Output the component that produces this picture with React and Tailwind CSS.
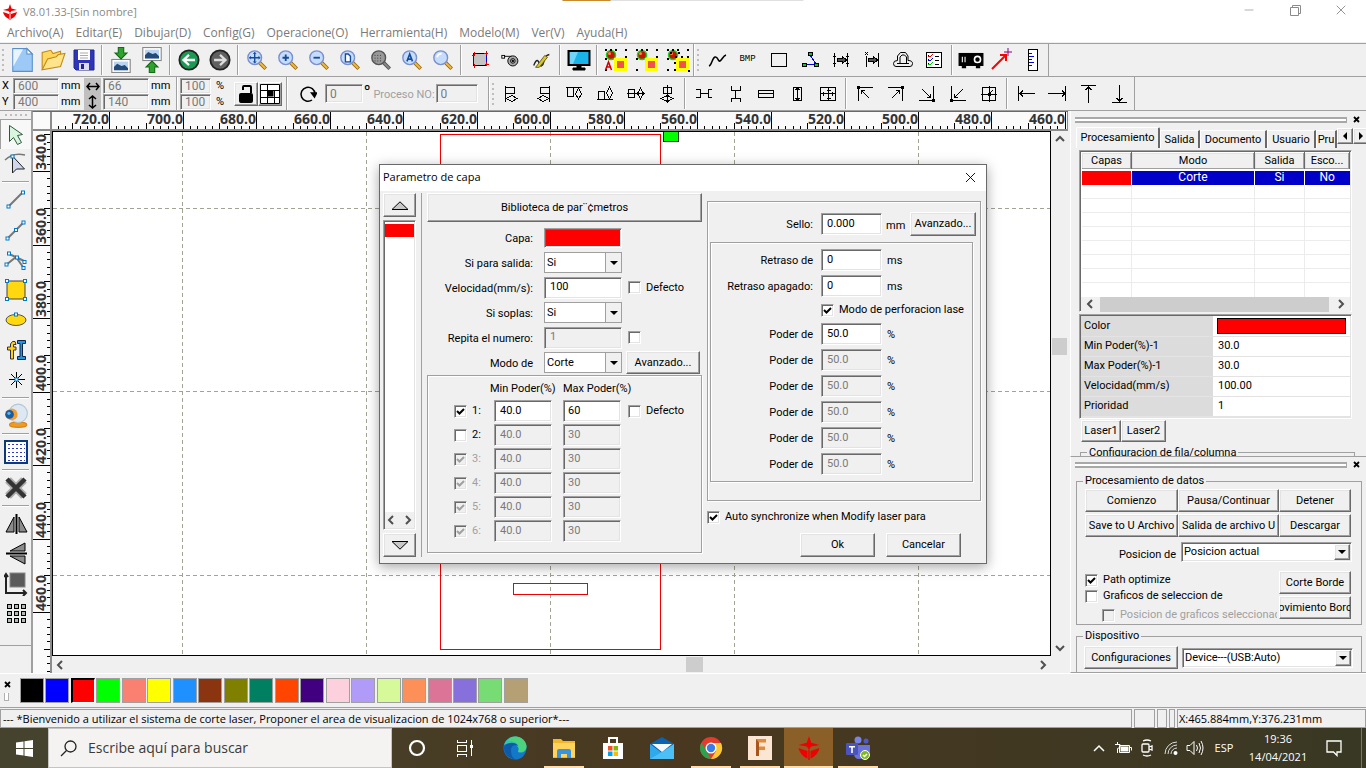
import React, { useState } from 'react';
import { Minus, X } from 'lucide-react';

const RAISED = 'border border-t-white border-l-white border-b-[#696969] border-r-[#696969] shadow-[inset_-1px_-1px_0_#a0a0a0,inset_1px_1px_0_#e3e3e3] bg-[#f0f0f0]';
const SUNKEN = 'border border-t-[#a0a0a0] border-l-[#a0a0a0] border-b-white border-r-white shadow-[inset_1px_1px_0_#696969,inset_-1px_-1px_0_#e3e3e3]';

/* ---------- basic controls ---------- */

const Icon = ({ size = 24, children, crisp = true, label }) => (
    <svg
        width={size}
        height={size}
        viewBox="0 0 24 24"
        fill="none"
        stroke="#000"
        aria-label={label}
        shapeRendering={crisp ? 'crispEdges' : 'auto'}
        className="shrink-0"
    >
        {children}
    </svg>
);

const Button = ({ className = '', children }) => (
    <button type="button" className={`${RAISED} flex items-center justify-center overflow-hidden whitespace-nowrap ${className}`}>
        {children}
    </button>
);

const Field = ({ value, disabled, label, className = '' }) => {
    const [text, setText] = useState(value);
    return (
        <input
            type="text"
            aria-label={label}
            value={text}
            disabled={disabled}
            onChange={(e) => setText(e.target.value)}
            className={`${SUNKEN} min-w-0 rounded-none outline-none ${disabled ? 'bg-[#f0f0f0] text-[#7a7a7a]' : 'bg-white text-black'} ${className}`}
        />
    );
};

const Check = ({ defaultChecked, disabled, label, children, className = '' }) => {
    const [on, setOn] = useState(!!defaultChecked);
    return (
        <label className={`flex items-center gap-[5px] whitespace-nowrap ${disabled ? 'text-[#a0a0a0]' : ''} ${className}`}>
            <span className="grid shrink-0">
                <input
                    type="checkbox"
                    aria-label={label}
                    checked={on}
                    disabled={disabled}
                    onChange={(e) => setOn(e.target.checked)}
                    className={`${SUNKEN} col-start-1 row-start-1 size-[13px] appearance-none ${disabled ? 'bg-[#f0f0f0]' : 'bg-white'}`}
                />
                {on && (
                    <svg width="13" height="13" className="pointer-events-none col-start-1 row-start-1" fill="none" stroke={disabled ? '#a0a0a0' : '#000'} strokeWidth="2">
                        <path d="M3 6l2.5 2.5L10 4" />
                    </svg>
                )}
            </span>
            {children}
        </label>
    );
};

const Combo = ({ options, label, className = '', deep }) => (
    <span className={`grid ${deep ? SUNKEN : 'border border-[#a0a0a0]'} bg-white ${className}`}>
        <select aria-label={label} className="col-start-1 row-start-1 min-w-0 appearance-none bg-transparent pl-[2px] outline-none">
            {options.map((o) => <option key={o}>{o}</option>)}
        </select>
        <span className={`pointer-events-none col-start-1 row-start-1 flex w-4 items-center justify-center justify-self-end ${deep ? `${RAISED} my-px mr-px` : 'border-l border-[#a0a0a0] bg-[#f0f0f0]'}`}>
            <svg width="8" height="4"><path d="M0 0h8L4 4z" /></svg>
        </span>
    </span>
);

const Tool = ({ name, icon, className = '' }) => (
    <button type="button" title={name} className={`flex h-full w-[31px] shrink-0 items-center justify-center ${className}`}>
        {icon}
    </button>
);

const Sep = () => (
    <span className="flex h-full w-[6px] shrink-0 justify-center py-px">
        <span className="w-[2px] border-r border-white bg-[#a0a0a0]" />
    </span>
);

const Gripper = () => (
    <span className="flex w-[6px] shrink-0 flex-col items-center justify-center gap-[3px]">
        {[0, 1, 2, 3, 4].map((i) => <span key={i} className="size-[2px] bg-[#bdbdbd]" />)}
    </span>
);

const Arrow = ({ dir }) => {
    const paths = { left: 'M8 2L4 6l4 4', right: 'M4 2l4 4-4 4', up: 'M2 8l4-4 4 4', down: 'M2 4l4 4 4-4' };
    return (
        <svg width="12" height="12" fill="none" stroke="#505050" strokeWidth="2" className="shrink-0">
            <path d={paths[dir]} />
        </svg>
    );
};

/* ---------- main toolbar icons ---------- */

const Lens = ({ children, gray }) => (
    <Icon size={22} crisp={false}>
        <path d="M14 14l7.500 7.500" stroke={gray ? '#555' : '#9a6a10'} strokeWidth="4" />
        <path d="M14 14l7 7" stroke={gray ? '#888' : '#f0bb40'} strokeWidth="2" />
        <circle cx="9.500" cy="9.500" r="7.500" fill={gray ? '#999' : '#c5dcfa'} stroke={gray ? '#555' : '#7a8fd0'} strokeWidth="1.500" />
        <g stroke="#164b9c" strokeWidth="2">{children}</g>
    </Icon>
);

const PictureThumb = ({ y }) => (
    <g>
        <rect x="3.500" y={y} width="17" height="12" fill="#fff" stroke="#888" />
        <rect x="5.500" y={y + 2} width="13" height="8" fill="#b9d5f2" stroke="none" />
        <path d={`M5.500 ${y + 10}v-3l3-3 4 2 3-1 3 3v2z`} fill="#234a78" stroke="none" />
    </g>
);

const Node = ({ x, y }) => <rect x={x} y={y} width="2" height="2" fill="#000" stroke="none" />;

const LayerIcon = ({ variant }) => (
    <Icon crisp={false}>
        <circle cx="7" cy="7" r="4.500" fill="#c01800" stroke="#20d020" strokeWidth="1.500" />
        <circle cx="5.500" cy="5.500" r="1.500" fill="#ff8050" stroke="none" />
        <rect x="10" y="10" width="13" height="13" fill="#ffff00" stroke="none" />
        <rect x="13" y="13" width="7" height="7" fill="#f05050" stroke="none" />
        {[[1, 1], [6, 1], [11, 1], [21, 1], [1, 21], [21, 8], [1, 10]].map(([x, y]) => <Node key={`${x}-${y}`} x={x} y={y} />)}
        {variant === 'a' && <path d="M1.500 22l3-8 3 8M2.500 19h4" stroke="#d00000" strokeWidth="1.500" />}
        {variant === 'c' && [[9, 8], [15, 8], [8, 14], [8, 21], [12, 4], [4, 4], [22, 22]].map(([x, y]) => <Node key={`${x}-${y}`} x={x} y={y} />)}
    </Icon>
);

const fileTools = [
    ['Nuevo', <Icon size={26} crisp={false}><path d="M3.500 1.500h13l5 5v16h-18z" fill="#9cc9f6" stroke="#5b8fca" /><path d="M4 2h9L4 18z" fill="#e8f4ff" stroke="none" /><path d="M16.500 1.500v5h5z" fill="#fff" stroke="#5b8fca" /></Icon>],
    ['Abrir', <Icon size={26} crisp={false}><path d="M2 21V5l8-2 2 3 7-2v4" fill="#ffd75e" stroke="#c08a18" /><path d="M2 21L7 11l8-2 2-2 6-1-4 12z" fill="#ffe48c" stroke="#c08a18" /></Icon>],
    ['Guardar', <Icon size={24} crisp={false}><path d="M2 2h20v20H4l-2-2z" fill="#2e35b8" stroke="#20268c" /><rect x="6" y="2" width="12" height="10" fill="#fff" stroke="none" /><path d="M8 5h8M8 7.500h8M8 10h8" stroke="#aaa" /><rect x="7" y="15" width="10" height="7" fill="#dde" stroke="none" /><rect x="9" y="16" width="3" height="5" fill="#20268c" stroke="none" /></Icon>],
];
const importTools = [
    ['Importar', <Icon size={26} crisp={false}><PictureThumb y={11.5} /><path d="M9.500 0.500h5v5h3L12 11 6.500 5.500h3z" fill="#2fa32f" stroke="#136b13" /></Icon>],
    ['Exportar', <Icon size={26} crisp={false}><PictureThumb y={0.5} /><path d="M9.500 23.500h5v-5h3L12 13l-5.500 5.500h3z" fill="#2fa32f" stroke="#136b13" /></Icon>],
];
const historyTools = [
    ['Deshacer', <Icon size={22} crisp={false}><circle cx="12" cy="12" r="10.500" fill="#1c9a54" stroke="#222" strokeWidth="2" /><path d="M18.500 12H7M12 6.500L6 12l6 5.500" stroke="#fff" strokeWidth="2.500" /></Icon>],
    ['Rehacer', <Icon size={22} crisp={false}><circle cx="12" cy="12" r="10.500" fill="#606060" stroke="#222" strokeWidth="2" /><path d="M5.500 12H17M12 6.500l6 5.500-6 5.500" stroke="#ddd" strokeWidth="2.500" /></Icon>],
];
const zoomTools = [
    ['Mover', <Lens><path d="M9.500 4v11M4 9.500h11" strokeWidth="1.500" /><path d="M8 5.500l1.500-2 1.500 2M8 13.500l1.500 2 1.500-2M5.500 8l-2 1.500 2 1.500M13.500 8l2 1.500-2 1.500" strokeWidth="1" /></Lens>],
    ['Acercar', <Lens><path d="M9.500 6v7M6 9.500h7" /></Lens>],
    ['Alejar', <Lens><path d="M6 9.500h7" /></Lens>],
    ['Ver pagina', <Lens><path d="M7 5.500h3l2.500 2.500v6H7z" fill="#fff" strokeWidth="1.500" /></Lens>],
    ['Ver mesa', <Lens gray><path d="M5 7h9M5 10h9M5 13h9" stroke="#333" strokeWidth="1" strokeDasharray="1 2" /></Lens>],
    ['Ver todo', <Lens><path d="M6.500 13.500l3-8 3 8M7.500 11h4" strokeWidth="1.800" /></Lens>],
    ['Ver seleccion', <Lens><path d="M5.500 9q1-4 5-4" stroke="#fff" /></Lens>],
];
const pathTools = [
    ['Marco', <Icon><rect x="5.500" y="5.500" width="13" height="12" fill="#c4c4c4" stroke="#0000e0" /><path d="M5.500 5.500h13M5 17.500h14" stroke="#000" /><path d="M4 7.500h3M16 5.500h4M18.500 3v4M6.500 4v3M6.500 16v4M17 16.500h4M18.500 14v4" stroke="#e00000" /></Icon>],
    ['Entrada', <Icon size={22} crisp={false}><path d="M4 8h9" /><rect x="2" y="7" width="3" height="3" fill="#fff" /><circle cx="14" cy="13" r="5.500" fill="#aaa" /><circle cx="14" cy="13" r="2.500" fill="#ddd" /><circle cx="14" cy="13" r="1" fill="#000" /></Icon>],
    ['Editar', <Icon size={22} crisp={false}><path d="M3 18c3-8 5-6 6-2s4 3 5-2 2-7 6-8" stroke="#222" strokeWidth="1.500" /><path d="M5 20L15 7l3 2L9 20z" fill="#d6c72a" stroke="#665c10" /></Icon>],
];
const previewTools = [
    ['Vista previa', <Icon crisp={false}><rect x="1.500" y="3" width="21" height="14" fill="#19b3ea" stroke="#000" strokeWidth="2" /><path d="M3 4h8l-5 12H3z" fill="#6fd5fa" stroke="none" /><path d="M10 18h4v2h4v2H6v-2h4z" fill="#000" /></Icon>],
];
const layerTools = [
    ['Capas A', <LayerIcon variant="a" />],
    ['Capas B', <LayerIcon variant="b" />],
    ['Capas C', <LayerIcon variant="c" />],
];
const drawTools = [
    ['Curva', <Icon crisp={false}><path d="M4 18c3-1 3-8 6-9s3 5 5 4 3-5 6-6" strokeWidth="1.500" /></Icon>],
    ['BMP', <span className="font-['Liberation_Mono',monospace] text-[9px] text-black">BMP</span>],
    ['Rectangulo', <Icon><rect x="4.500" y="5.500" width="15" height="13" strokeWidth="1" /></Icon>],
    ['Nodos', <Icon><path d="M6 16.500h12M12 7l6 9" stroke="#0000e0" />{[[10, 4], [4, 15], [16, 15]].map(([x, y]) => <rect key={x} x={x + 0.5} y={y + 0.5} width="4" height="3" fill="#00d020" />)}</Icon>],
    ['Ajuste', <Icon><path d="M5.500 5v14M18.500 5v14M4 8.500h3M4 15.500h3M17 8.500h3M17 15.500h3" /><path d="M8 10.500h5v-2l5 3.500-5 3.500v-2H8z" fill="#555" /></Icon>],
    ['Ajuste lateral', <Icon><path d="M6.500 8v11M18.500 5v14M5 4l3 3M8 4L5 7" /><path d="M8 10.500h5v-2l5 3.500-5 3.500v-2H8z" fill="#555" /></Icon>],
    ['Contorno', <Icon crisp={false}><path d="M5 18.500q-2.500 0-2.500-3t4-3V8l3-3.500h5L17 8v4.500q4.500 0 4.500 3t-2.500 3z" /><path d="M6 15.500h12M9 15V9l2-2h2.500l2 2v6" /></Icon>],
    ['Lista', <Icon><rect x="4.500" y="4.500" width="15" height="15" fill="#fff" strokeWidth="1" /><path d="M6 8l2 1 3-3" stroke="#e00000" /><path d="M6 12l2 1 3-3" stroke="#0000e0" /><path d="M6 16l2 1 3-3" stroke="#00c000" /><path d="M13 8.500h4M13 12.500h4M13 16.500h4M6 7.500h1M6 11.500h1M6 15.500h1" /></Icon>],
];
const deviceTools = [
    ['Proyector', <Icon size={26} crisp={false}><rect x="1" y="6" width="22" height="11" fill="#000" /><path d="M4 17v2h3v-2M17 17v2h3v-2" fill="#000" /><path d="M4 9v5M6.500 9v5" stroke="#fff" /><circle cx="18" cy="11.500" r="2.800" fill="#000" stroke="#fff" strokeWidth="1.500" /></Icon>],
    ['Origen', <Icon crisp={false}><path d="M2 21L15 8M10 7l6 0v6" stroke="#f00" strokeWidth="2" /><path d="M18 0v8M14 4h8" stroke="#800080" /></Icon>],
    ['Regla', <Icon><rect x="7.500" y="1.500" width="9" height="21" fill="#fff" /><path d="M8 5.500h3M8 8.500h5M8 11.500h3M8 14.500h5M8 17.500h3" stroke="#0000e0" /></Icon>],
];

/* ---------- align icons ---------- */

const Corner = ({ d, x, y }) => (
    <Icon>
        <path d={d} />
        <rect x={x} y={y} width="3" height="3" fill="#000" stroke="none" />
    </Icon>
);

const alignTools = [
    ['Izquierda', <Icon><path d="M5.500 4v16M5.500 5.500h9v6h-9M6 16.500l6-3 5 3-5 3z" /></Icon>],
    ['Derecha', <Icon><path d="M18.500 4v16M18.500 5.500h-9v6h9M18 16.500l-6-3-5 3 5 3z" /></Icon>],
    ['Arriba', <Icon><path d="M4 5.500h16M5.500 6v8h6V6M16.500 6l3 6-3 5-3-5z" /></Icon>],
    ['Abajo', <Icon><path d="M4 17.500h16M5.500 17V9h6v8M16.500 17l3-6-3-6-3 6z" /></Icon>],
    ['Centro H', <Icon><path d="M3 11.500h18M4.500 7.500h6v8h-6zM16.500 6l3 5.500-3 5.500-3-5.500z" /></Icon>],
    ['Centro V', <Icon><path d="M12.500 3v18M8.500 5.500h8v6h-8zM6 16.500l6.500-3 5.500 3-5.500 3z" /></Icon>],
];
const spaceTools = [
    ['Espacio H', <Icon><path d="M4 7.500h4v8H4M20 7.500h-4v8h4M8 11.500h8" /></Icon>],
    ['Espacio V', <Icon><path d="M8 4v4h9V4M8 20v-4h9v4M12.500 8v8" /></Icon>],
    ['Mismo ancho', <Icon><path d="M4.500 8.500h15v7h-15zM5 11.500h14" /></Icon>],
    ['Mismo alto', <Icon><path d="M8.500 5.500h8v13h-8zM12.500 6v12M10.500 8l2-2 2 2M10.500 16l2 2 2-2" /></Icon>],
    ['Mismo tamaño', <Icon><path d="M4.500 5.500h15v13h-15zM12.500 6v12M5 11.500h14M10.500 8h4M10.500 16h4M7.500 10v4M16.500 10v4" /></Icon>],
];
const cornerTools = [
    ['Sup. izquierda', <Corner d="M5.500 5v14M5 5.500h15M8 8l8 8M8.500 12V8.500H12" x="4" y="4" />],
    ['Sup. derecha', <Corner d="M18.500 5v14M4 5.500h15M16 8l-8 8M12 8.500h3.500V12" x="17" y="4" />],
    ['Inf. derecha', <Corner d="M18.500 4v15M4 18.500h15M7 7l9 9M12 15.500h3.500V12" x="17" y="17" />],
    ['Inf. izquierda', <Corner d="M5.500 4v15M5 18.500h15M17 7l-9 9M12 15.500H8.500V12" x="4" y="17" />],
    ['Centro', <Corner d="M5.500 5.500h13v13h-13zM12.500 4v16M4 12.500h16M13 11l3-3" x="11" y="11" />],
];
const edgeTools = [
    ['Borde izquierdo', <Icon><path d="M4.500 4v15M5 11.500h16M9 8.500l-3 3 3 3" /></Icon>],
    ['Borde derecho', <Icon><path d="M20.500 4v15M20 11.500H3M17 8.500l3 3-3 3" /></Icon>],
    ['Borde superior', <Icon><path d="M5 3.500h15M12.500 4v17M9.500 8l3-3 3 3" /></Icon>],
    ['Borde inferior', <Icon><path d="M5 20.500h15M12.500 20V3M9.500 16l3 3 3-3" /></Icon>],
];

const ToolGroup = ({ tools }) => tools.map(([name, icon]) => <Tool key={name} name={name} icon={icon} />);

/* ---------- left bar ---------- */

const dot = (x, y) => <rect key={`${x},${y}`} x={x - 1.5} y={y - 1.5} width="3" height="3" fill="#fff" stroke="#0078c8" />;
const square = (x, y) => <rect key={`${x},${y}`} x={x + 0.5} y={y + 0.5} width="4" height="4" fill="#b4bab4" stroke="#000" />;

const sideGroups = [
    [
        ['Seleccionar', <Icon crisp={false}><path d="M5.500 2.500l13 9-5 1 4 7-4 2-4-7-4 4z" fill="#d8f5e0" stroke="#2d5a38" /></Icon>],
        ['Editar nodo', <Icon crisp={false}><path d="M1 8c6-6 12-7 20-5" stroke="#777" strokeWidth="1.500" /><path d="M8.500 4v17l4-4h8z" fill="#cfd6ee" stroke="#222" />{dot(8.5, 4.5)}</Icon>],
    ],
    [
        ['Linea', <Icon crisp={false}><path d="M4 19L19 4" stroke="#777" strokeWidth="2" />{dot(4.5, 18.5)}{dot(19, 4.5)}</Icon>],
        ['Polilinea', <Icon crisp={false}><path d="M3 21L20 4" stroke="#777" strokeWidth="2" />{dot(3.5, 20.5)}{dot(12, 12)}{dot(19.5, 4.5)}</Icon>],
        ['Curva', <Icon crisp={false}><path d="M2 17L12 9l8 4M5 6l7 3 7 10" stroke="#777" strokeWidth="2" />{dot(2.5, 16.5)}{dot(5, 5.5)}{dot(13, 9.5)}{dot(20.5, 14)}{dot(19.5, 20)}</Icon>],
        ['Rectangulo', <Icon crisp={false}><rect x="3" y="3" width="18" height="18" fill="#ffd810" stroke="#444" />{dot(3, 3)}{dot(21, 3)}{dot(3, 21)}{dot(21, 21)}</Icon>],
        ['Elipse', <Icon crisp={false}><ellipse cx="12" cy="12" rx="10" ry="5.500" fill="#ffd810" stroke="#555" />{dot(12, 6.5)}</Icon>],
        ['Texto', <Icon crisp={false}><path d="M11 3.500H8.500L6.500 6v3h-3v3h3v9h3v-9H12V9H9.500V6.500H12z" fill="#ffd020" stroke="#333" /><path d="M13.500 2.500h8v3h-3v13h3v3h-8v-3h2.500v-13h-2.500z" fill="#2196e0" stroke="#124" /></Icon>],
        ['Punto', <Icon crisp={false}><path d="M12.500 4v16M5 11.500h16M7 6l11 11M18 6L7 17" />{dot(12.5, 11.5)}</Icon>],
    ],
    [
        ['Camara', <Icon size={26} crisp={false}><ellipse cx="14" cy="20" rx="8" ry="2.500" fill="#f29a20" stroke="#d98514" /><circle cx="14" cy="9.500" r="8.500" fill="#dde8f2" stroke="#b4c6d6" /><circle cx="8" cy="10.500" r="5.500" fill="#f2a035" stroke="none" /><circle cx="6" cy="10.500" r="4" fill="#1c5c9c" stroke="none" /><circle cx="5.500" cy="9.500" r="1.500" fill="#5fb4ea" stroke="none" /></Icon>],
    ],
    [
        ['Matriz', <Icon><rect x="1" y="1" width="22" height="22" fill="#fff" stroke="#0a3a78" strokeWidth="2" /><path d="M4 4.500h17M4 8.500h17M4 12.500h17M4 16.500h17M4 20.500h17" stroke="#3038c8" strokeDasharray="2 2" /></Icon>],
    ],
    [
        ['Borrar', <Icon crisp={false}><path d="M4 4l16 16M20 4L4 20" stroke="#aaa" strokeWidth="8" /><path d="M3 3l18 18M21 3L3 21" stroke="#333" strokeWidth="4.500" /></Icon>],
    ],
    [
        ['Espejo H', <Icon crisp={false}><path d="M12.500 2v20" strokeWidth="2" /><path d="M10 5v15H2zM15 5v15h8z" fill="#8c8c8c" /></Icon>],
        ['Espejo V', <Icon crisp={false}><path d="M2 11.500h21" strokeWidth="2" /><path d="M21 9V1L6 9zM21 14v8L6 14z" fill="#8c8c8c" /></Icon>],
        ['Posicion', <Icon crisp={false}><rect x="6" y="1" width="15" height="14" fill="#5a5a5a" stroke="#888" /><path d="M2 2v19h20M19 18l3 3-3 3M0 5l2-3 2 3" strokeWidth="2" stroke="#222" /></Icon>],
        ['Copiar matriz', <Icon crisp={false}>{[2, 9, 16].map((y) => [3, 10, 17].map((x) => square(x, y)))}</Icon>],
    ],
];

const SideBar = () => (
    <nav className="flex w-8 shrink-0 flex-col border-r border-[#a0a0a0] bg-[#f0f0f0]">
        <div className="flex h-2 items-center justify-center gap-[3px]">
            {[0, 1, 2, 3, 4].map((i) => <span key={i} className="size-[2px] bg-[#bdbdbd]" />)}
        </div>
        {sideGroups.map((group, i) => (
            <div key={i} className="flex flex-col">
                {i > 0 && <span className="mx-[2px] my-[2px] h-[2px] border-b border-white bg-[#a0a0a0]" />}
                {group.map(([name, icon], j) => (
                    <button
                        key={name}
                        type="button"
                        title={name}
                        className={`flex h-[30px] items-center justify-center ${i === 0 && j === 0 ? 'border-t border-l border-[#a0a0a0] bg-[#f8f8f8]' : ''}`}
                    >
                        {icon}
                    </button>
                ))}
            </div>
        ))}
        <span className="mt-4 border-t border-[#a0a0a0]" />
    </nav>
);

/* ---------- top ---------- */

const menus = ['Archivo(A)', 'Editar(E)', 'Dibujar(D)', 'Config(G)', 'Operacione(O)', 'Herramienta(H)', 'Modelo(M)', 'Ver(V)', 'Ayuda(H)'];

const Logo = ({ size = 16 }) => (
    <svg width={size} height={size} viewBox="0 0 16 16" fill="#f00000">
        <path d="M8 0l1.500 4.500L15 6l-5.500 1L8 9 6.500 7 1 6l5.500-1.500z" />
        <path d="M1 8l6 2v5q-5-2-6-7zM15 8l-6 2v5q5-2 6-7zM7.500 9h1v7h-1z" />
    </svg>
);

const TitleBar = () => (
    <header className="relative bg-white text-[#7a7a7a]">
        <div className="absolute top-0 left-1/2 flex h-px w-[241px] -translate-x-1/2 bg-[#e0e0e0]">
            <span className="w-12 bg-[#c88a2c]" />
        </div>
        <div className="flex h-6 items-center">
            <span className="flex w-[23px] justify-center pr-1"><Logo /></span>
            <h1 className="flex-1 text-[11px] text-[#8a8a8a]">V8.01.33-[Sin nombre]</h1>
            <button type="button" title="Minimizar" className="flex w-[46px] justify-center pb-1"><Minus size={14} strokeWidth={1} /></button>
            <button type="button" title="Restaurar" className="flex w-[46px] justify-center pb-1">
                <svg width="11" height="11" fill="none" stroke="#8a8a8a"><path d="M.5 2.500h8v8h-8zM2.500 2V.5h8v8H9" /></svg>
            </button>
            <button type="button" title="Cerrar" className="mr-[2px] flex w-[46px] justify-center pb-1"><X size={16} strokeWidth={1.2} /></button>
        </div>
        <nav className="flex h-[18px] items-center gap-3 pl-[7px] text-xs">
            {menus.map((m) => <button key={m} type="button">{m}</button>)}
        </nav>
    </header>
);

const MainToolbar = () => (
    <div className="mt-px flex h-[33px] border-t border-[#a0a0a0]">
        <div className="flex border-r border-[#a0a0a0]">
            <Gripper />
            <ToolGroup tools={fileTools} /><Sep />
            <ToolGroup tools={importTools} /><Sep />
            <ToolGroup tools={historyTools} /><Sep />
            <ToolGroup tools={zoomTools} /><Sep />
            <ToolGroup tools={pathTools} /><Sep />
            <ToolGroup tools={previewTools} /><Sep />
            <ToolGroup tools={layerTools} />
        </div>
        <div className="flex border-r border-l border-r-[#a0a0a0] border-l-white">
            <Gripper />
            <ToolGroup tools={drawTools} /><Sep />
            <ToolGroup tools={deviceTools} />
        </div>
    </div>
);

const SizeField = ({ label, value }) => (
    <Field label={label} value={value} disabled className="h-4 w-[46px] px-1 text-xs" />
);

const CoordToolbar = () => (
    <div className="flex h-[34px] border-t border-[#a0a0a0] font-[Roboto,sans-serif] text-[11px]">
        <div className="grid w-[177px] grid-cols-[13px_46px_25px_17px_48px_1fr] grid-rows-2 items-center border-r border-[#a0a0a0] pt-px">
            <span className="pl-[2px]">X</span>
            <SizeField label="X" value="600" />
            <span className="pl-[2px]">mm</span>
            <span className="flex h-full items-center justify-center bg-[#c0c0c0]"><svg width="14" height="9" stroke="#000" fill="none" strokeWidth="1.500"><path d="M1 4.500h12M4 1L1 4.500 4 8M10 1l3 3.500L10 8" /></svg></span>
            <span className="flex pl-[2px]"><SizeField label="Ancho" value="66" /></span>
            <span className="pl-[2px]">mm</span>
            <span className="pl-[2px]">Y</span>
            <SizeField label="Y" value="400" />
            <span className="pl-[2px]">mm</span>
            <span className="flex h-full items-center justify-center bg-[#c0c0c0]"><svg width="9" height="14" stroke="#000" fill="none" strokeWidth="1.500"><path d="M4.500 1v12M1 4l3.500-3L8 4M1 10l3.500 3L8 10" /></svg></span>
            <span className="flex pl-[2px]"><SizeField label="Alto" value="140" /></span>
            <span className="pl-[2px]">mm</span>
        </div>
        <div className="flex items-center border-r border-l border-r-[#a0a0a0] border-l-white pr-[4px] pl-[2px]">
            <div className="grid h-full grid-cols-[31px_18px] grid-rows-2 items-center gap-x-[5px] pt-px">
                <Field label="Escala X" value="100" disabled className="h-4 w-[31px] px-1 text-xs" />
                <span>%</span>
                <Field label="Escala Y" value="100" disabled className="h-4 w-[31px] px-1 text-xs" />
                <span>%</span>
            </div>
            <Button className="size-6 border-[#696969]">
                <svg width="18" height="20" fill="none" stroke="#000" strokeWidth="2"><rect x="3" y="10" width="12" height="8" rx="1" fill="#000" /><path d="M6 6V3q0-1 1-1h6q1 0 1 1v6" /></svg>
            </Button>
            <Button className="size-6">
                <svg width="20" height="20" fill="#fff" stroke="#000"><path d="M.5.5h19v19H.5zM.5 6.500h19M7.500.5v19M14.500 6.500v13M.5 13.500h19" /><rect x="8" y="7" width="5" height="5" fill="#000" /></svg>
            </Button>
        </div>
        <div className="flex w-[202px] items-center border-r border-l border-r-[#a0a0a0] border-l-white pl-[11px]">
            <svg width="18" height="18" fill="none" stroke="#000" strokeWidth="1.500" className="shrink-0"><path d="M13 15A7 7 0 1 1 16 9" /><path d="M12.500 8h5l-2 4z" fill="#000" /></svg>
            <Field label="Angulo" value="0" disabled className="ml-[8px] h-[19px] w-[38px] px-1 text-xs" />
            <span className="-mt-2 ml-px text-sm">º</span>
            <span className="mt-1 ml-[3px] text-[11px] whitespace-nowrap text-[#a0a0a0]">Proceso NO:</span>
            <Field label="Proceso" value="0" disabled className="ml-px h-[19px] w-[42px] px-1 text-xs" />
        </div>
        <div className="flex border-r border-l border-r-[#a0a0a0] border-l-white">
            <Gripper />
            <ToolGroup tools={alignTools} /><Sep />
            <ToolGroup tools={spaceTools} /><Sep />
            <ToolGroup tools={cornerTools} /><Sep />
            <ToolGroup tools={edgeTools} />
        </div>
    </div>
);

/* ---------- drawing area ---------- */

const STEP = 73.5;
const range = (n) => Array.from({ length: n }, (_, i) => i);
const ticks = (first, count) => range(count).map((i) => ({
    at: Math.round(first + (i * STEP) / 10),
    size: i % 10 === 0 ? 17 : i % 5 === 0 ? 6 : 3,
}));

const RulerTop = () => (
    <svg className="block h-full w-full overflow-x-clip overflow-y-visible bg-[#fafafa]" shapeRendering="crispEdges">
        {ticks(57 - STEP, 150).map(({ at, size }, i) => <path key={i} d={`M${at + 0.5} 17v-${size}`} stroke="#000" />)}
        <g className="font-['Open_Sans',sans-serif] text-sm font-bold" fill="#333" textAnchor="end">
            {range(14).map((i) => <text key={i} x={Math.round(57 + i * STEP)} y="12">{`${720 - i * 20}.0`}</text>)}
        </g>
    </svg>
);

const RulerLeft = () => (
    <svg className="block h-full w-full overflow-x-visible overflow-y-clip bg-[#fafafa]" shapeRendering="crispEdges">
        {ticks(40 - STEP, 90).map(({ at, size }, i) => <path key={i} d={`M17 ${at + 0.5}h-${size}`} stroke="#000" />)}
        <g className="font-['Open_Sans',sans-serif] text-sm font-bold" fill="#333">
            {range(7).map((i) => <text key={i} transform={`translate(13 ${Math.round(39 + i * STEP)}) rotate(-90)`}>{`${340 + i * 20}.0`}</text>)}
        </g>
    </svg>
);

const Drawing = () => (
    <svg className="block h-full w-full bg-white" shapeRendering="crispEdges" fill="none">
        <g stroke="#a3a394" strokeDasharray="4 3">
            {range(5).map((i) => <line key={i} x1={129.5 + i * 184} x2={129.5 + i * 184} y1="0" y2="100%" />)}
            {[76.5, 259.5, 443.5].map((y) => <line key={y} x1="0" x2="100%" y1={y} y2={y} />)}
        </g>
        <rect x="387.500" y="2.500" width="220" height="515" stroke="#f00000" />
        <rect x="460.500" y="451.500" width="74" height="11" stroke="#f00000" />
        <rect x="610.500" y="-1.500" width="15" height="11" fill="#00ff00" stroke="#004000" />
    </svg>
);

const Workspace = () => (
    <main className="grid min-w-0 flex-1 grid-cols-[19px_1fr_17px] grid-rows-[19px_1fr_17px] border-t border-l border-t-[#696969] border-l-[#a0a0a0] bg-[#f0f0f0]">
        <div className="border-r-2 border-b-2 border-[#8c8c8c] bg-[#fafafa]" />
        <div className="col-span-2 min-w-0 border-r border-b-2 border-[#8c8c8c]"><RulerTop /></div>
        <div className="row-span-2 min-h-0 border-r-2 border-[#8c8c8c]"><RulerLeft /></div>
        <div className="min-h-0 min-w-0 border border-black"><Drawing /></div>
        <div className="flex flex-col items-center py-[2px]">
            <Arrow dir="up" />
            <span className="mt-[193px] h-[17px] w-[15px] bg-[#cdcdcd]" />
            <span className="mt-auto"><Arrow dir="down" /></span>
        </div>
        <div className="flex items-center justify-between px-[2px]">
            <Arrow dir="left" />
            <span className="ml-[285px] h-[15px] w-[17px] bg-[#cdcdcd]" />
            <Arrow dir="right" />
        </div>
        <div />
    </main>
);

/* ---------- right panels ---------- */

const PanelHead = ({ title }) => (
    <div className="flex h-[8px] items-center pl-1">
        <span className="h-[6px] flex-1 border-y-2 border-r border-[#a8a8a8] bg-white" />
        <button type="button" title={title} className="flex w-[19px] justify-center">
            <svg width="7" height="7" stroke="#000" strokeWidth="1.800"><path d="M1 1l5 5M6 1L1 6" /></svg>
        </button>
    </div>
);

const tabs = [
    ['Salida', 'w-10'],
    ['Documento', 'w-[67px]'],
    ['Usuario', 'w-[49px]'],
    ['Pru', 'w-[21px] border-r-0'],
];

const layerProps = [
    ['Min Poder(%)-1', '30.0'],
    ['Max Poder(%)-1', '30.0'],
    ['Velocidad(mm/s)', '100.00'],
    ['Prioridad', '1'],
];

const LayerPanel = () => (
    <section className="flex h-[345px] shrink-0 flex-col overflow-hidden border-l border-white pt-[5px]">
        <PanelHead title="Cerrar capas" />
        <div className="mt-[4px] flex h-[21px] shrink-0 items-end overflow-hidden pl-[5px]">
            <button type="button" className="h-[21px] w-[84px] shrink-0 rounded-t-xs border-t border-r-2 border-l border-t-white border-r-[#696969] border-l-white">Procesamiento</button>
            {tabs.map(([name, width]) => (
                <button key={name} type="button" className={`h-[18px] shrink-0 overflow-hidden border-t border-r-2 border-l border-t-white border-r-[#696969] border-l-white ${width}`}>{name}</button>
            ))}
            <Button className="mb-[4px] h-4 w-4 shrink-0"><svg width="4" height="8"><path d="M4 0v8L0 4z" /></svg></Button>
            <Button className="mb-[4px] h-4 w-4 shrink-0"><svg width="4" height="8"><path d="M0 0v8l4-4z" /></svg></Button>
        </div>
        <div className={`${SUNKEN} mt-[2px] mr-[14px] ml-[8px] flex h-[162px] shrink-0 flex-col bg-white p-px`}>
            <table className="w-full table-fixed border-collapse text-center">
                <thead>
                    <tr className="h-[17px]">
                        <th className={`${RAISED} w-[50px] font-normal`}>Capas</th>
                        <th className={`${RAISED} font-normal`}>Modo</th>
                        <th className={`${RAISED} w-[50px] font-normal`}>Salida</th>
                        <th className={`${RAISED} w-[45px] font-normal`}>Esco...</th>
                    </tr>
                </thead>
                <tbody>
                    <tr className="h-[15px] border-t-2 border-white bg-[#0000c8] text-xs leading-[13px] text-white">
                        <td className="border-r border-white bg-[#ff0000]" />
                        <td className="border-r border-white">Corte</td>
                        <td className="border-r border-white">Si</td>
                        <td>No</td>
                    </tr>
                    {range(8).map((i) => (
                        <tr key={i} className={`h-[14px] ${i < 7 ? 'border-b border-[#ececec]' : ''}`}>
                            <td className="border-r border-[#ececec]" />
                            <td className="border-r border-[#ececec]" />
                            <td className="border-r border-[#ececec]" />
                            <td />
                        </tr>
                    ))}
                </tbody>
            </table>
            <div className="mt-auto flex h-[15px] shrink-0 items-center gap-[4px] bg-[#f0f0f0] px-[3px]">
                <Arrow dir="left" />
                <span className="h-full flex-1 bg-[#cdcdcd]" />
                <span className="pl-[2px]"><Arrow dir="right" /></span>
            </div>
        </div>
        <div className={`${SUNKEN} mt-[2px] mr-[14px] ml-[8px] shrink-0 bg-white p-px`}>
            <table className="w-full border-collapse">
                <tbody>
                    <tr className="h-5 border-b border-[#e3e3e3]">
                        <th className="w-[132px] bg-[#dcdcdc] pl-[3px] text-left font-normal">Color</th>
                        <td className="px-[4px]"><span className="block h-4 border border-black bg-[#ff0000]" /></td>
                    </tr>
                    {layerProps.map(([name, value]) => (
                        <tr key={name} className="h-5 border-b border-[#e3e3e3]">
                            <th className="bg-[#dcdcdc] pl-[3px] text-left font-normal">{name}</th>
                            <td className="pl-[5px]">{value}</td>
                        </tr>
                    ))}
                </tbody>
            </table>
        </div>
        <div className="mt-[1px] ml-[10px] flex h-[22px] shrink-0">
            <Button className="w-10">Laser1</Button>
            <Button className="w-[45px]">Laser2</Button>
        </div>
        <fieldset className="mt-[4px] mr-[11px] ml-[9px] h-5 shrink-0 border border-[#a0a0a0]">
            <legend className="ml-[6px] px-[2px]">Configuracion de fila/columna</legend>
        </fieldset>
    </section>
);

const ProcessPanel = () => (
    <section className="flex min-h-0 flex-1 flex-col overflow-hidden border-t border-b border-l border-[#a0a0a0] border-l-white pt-[4px]">
        <PanelHead title="Cerrar procesamiento" />
        <fieldset className="mt-[6px] mr-[4px] ml-[5px] h-[151px] shrink-0 border border-[#a0a0a0] px-[8px]">
            <legend className="-ml-[2px] px-[2px] leading-[14px]">Procesamiento de datos</legend>
            <div className="mt-px grid auto-rows-[23px] grid-cols-[93px_101px_72px] gap-y-[2px]">
                <Button>Comienzo</Button>
                <Button>Pausa/Continuar</Button>
                <Button>Detener</Button>
                <Button>Save to U Archivo</Button>
                <Button>Salida de archivo U</Button>
                <Button>Descargar</Button>
            </div>
            <label className="mt-[5px] flex w-[267px] items-center justify-end gap-[5px]">
                <span className="pt-[6px]">Posicion de</span>
                <Combo deep label="Posicion de" options={['Posicion actual', 'Origen', 'Origen maquina']} className="h-5 w-[171px]" />
            </label>
            <div className="mt-[9px] flex w-[266px] justify-between">
                <div className="flex min-w-0 flex-col gap-[2px] pt-[2px]">
                    <Check defaultChecked>Path optimize</Check>
                    <Check>Graficos de seleccion de</Check>
                    <Check disabled className="w-[192px] overflow-hidden pt-[3px] pl-[17px]">Posicion de graficos seleccionadc</Check>
                </div>
                <div className="flex shrink-0 flex-col gap-[2px]">
                    <Button className="h-[23px] w-[72px]">Corte Borde</Button>
                    <Button className="h-[23px] w-[72px]">ovimiento Borc</Button>
                </div>
            </div>
        </fieldset>
        <fieldset className="mt-[4px] mr-[4px] ml-[5px] h-[60px] shrink-0 border border-[#a0a0a0] px-[7px]">
            <legend className="-ml-[1px] px-[2px] leading-[14px]">Dispositivo</legend>
            <div className="mt-[3px] flex items-center gap-[4px]">
                <Button className="h-[23px] w-[94px]">Configuraciones</Button>
                <Combo deep label="Dispositivo" options={['Device---(USB:Auto)', 'Device---(Web)']} className="h-5 w-[171px]" />
            </div>
        </fieldset>
    </section>
);

/* ---------- layer dialog ---------- */

const LabeledRow = ({ label, children }) => (
    <div className="flex h-[25px] items-center">
        <span className="w-[106px] shrink-0 pt-[2px] text-right">{label}</span>
        <div className="ml-[11px] flex items-center">{children}</div>
    </div>
);

const powers = [
    { id: 1, min: '40.0', max: '60', checked: true },
    { id: 2, min: '40.0', max: '30', off: true },
    { id: 3, min: '40.0', max: '30', checked: true, off: true, locked: true },
    { id: 4, min: '40.0', max: '30', checked: true, off: true, locked: true },
    { id: 5, min: '40.0', max: '30', checked: true, off: true, locked: true },
    { id: 6, min: '40.0', max: '30', checked: true, off: true, locked: true },
];

const DelayRow = ({ label, value, unit, disabled }) => (
    <div className="flex h-[26px] items-center">
        <span className="w-[102px] shrink-0 pt-[2px] text-right">{label}</span>
        <Field label={label} value={value} disabled={disabled} className="ml-[8px] h-[22px] w-[61px] px-[5px] pb-[2px]" />
        <span className="ml-[5px] pt-[2px]">{unit}</span>
    </div>
);

const LayerDialog = () => (
    <div
        role="dialog"
        aria-label="Parametro de capa"
        className="absolute top-[164px] left-1/2 w-[608px] -translate-x-1/2 border border-[#6a6a6a] bg-[#f0f0f0] shadow-[0_3px_12px_rgba(0,0,0,0.35)]"
    >
        <div className="flex h-[26px] items-center justify-between bg-white pr-[7px] pb-[2px] pl-[3px] font-['Open_Sans',sans-serif]">
            <h2>Parametro de capa</h2>
            <button type="button" title="Cerrar"><X size={17} strokeWidth={1.3} /></button>
        </div>
        <div className="flex pt-[2px] pb-[6px] pl-[3px]">
            <div className="flex w-[33px] shrink-0 flex-col">
                <Button className="h-6"><svg width="18" height="9" fill="#c8c8c8" stroke="#000"><path d="M1 8.500h16L9 .8z" /></svg></Button>
                <div className={`${SUNKEN} mt-[3px] flex flex-1 flex-col bg-white p-px pt-[3px]`}>
                    <span className="h-[13px] bg-[#ff0000]" />
                    <span className="mt-auto flex h-4 items-center justify-between bg-[#f0f0f0]"><Arrow dir="left" /><Arrow dir="right" /></span>
                </div>
                <Button className="mt-[3px] h-6"><svg width="18" height="9" fill="#c8c8c8" stroke="#000"><path d="M1 .5h16L9 8.200z" /></svg></Button>
            </div>
            <span className="mr-[5px] ml-[5px] w-px shrink-0 bg-[#a0a0a0]" />
            <div className="w-[275px] shrink-0">
                <Button className="h-[29px] w-full">Biblioteca de par¨¢metros</Button>
                <div className="mt-[3px]">
                    <LabeledRow label="Capa:">
                        <button type="button" title="Color de capa" className={`${SUNKEN} h-5 w-[78px] bg-[#ff0000]`} />
                    </LabeledRow>
                    <LabeledRow label="Si para salida:">
                        <Combo label="Si para salida" options={['Si', 'No']} className="h-[21px] w-[78px]" />
                    </LabeledRow>
                    <LabeledRow label="Velocidad(mm/s):">
                        <Field label="Velocidad" value="100" className="h-[22px] w-[78px] px-[5px] pb-[2px]" />
                        <Check className="ml-[6px]">Defecto</Check>
                    </LabeledRow>
                    <LabeledRow label="Si soplas:">
                        <Combo label="Si soplas" options={['Si', 'No']} className="h-[21px] w-[78px]" />
                    </LabeledRow>
                    <LabeledRow label="Repita el numero:">
                        <Field label="Repita el numero" value="1" disabled className="h-[22px] w-[78px] px-[5px] pb-[2px]" />
                        <Check label="Repetir" className="ml-[6px]" />
                    </LabeledRow>
                    <LabeledRow label="Modo de">
                        <Combo label="Modo de" options={['Corte', 'Escanear', 'Punto']} className="h-[21px] w-[78px]" />
                        <Button className="ml-[4px] h-[23px] w-[74px]">Avanzado...</Button>
                    </LabeledRow>
                </div>
                <div className="h-[178px] border border-[#a0a0a0] pt-[2px] shadow-[inset_1px_1px_0_#fff,1px_1px_0_#fff]">
                    <div className="flex h-[21px] items-center pl-[62px] whitespace-nowrap">
                        <span className="w-[73px]">Min Poder(%)</span>
                        <span>Max Poder(%)</span>
                    </div>
                    {powers.map((p) => (
                        <div key={p.id} className="flex h-6 items-center">
                            <Check defaultChecked={p.checked} disabled={p.locked} className="ml-[26px] w-10">{p.id}:</Check>
                            <Field label={`Min ${p.id}`} value={p.min} disabled={p.off} className="h-[22px] w-[58px] px-[5px] pb-[2px]" />
                            <Field label={`Max ${p.id}`} value={p.max} disabled={p.off} className="ml-[11px] h-[22px] w-[58px] px-[4px] pb-[2px]" />
                            {p.id === 1 && <Check className="ml-[7px]">Defecto</Check>}
                        </div>
                    ))}
                </div>
            </div>
            <div className="ml-[5px] w-[274px] shrink-0 pt-[8px]">
                <div className="h-[300px] border border-[#a0a0a0] pt-[9px] pl-[2px] shadow-[inset_1px_1px_0_#fff,1px_1px_0_#fff]">
                    <div className="flex h-[26px] items-center">
                        <span className="w-[103px] pt-[2px] text-right">Sello:</span>
                        <Field label="Sello" value="0.000" className="ml-[8px] h-[22px] w-[61px] px-[5px] pb-[2px]" />
                        <span className="ml-[4px] w-6 pt-[4px]">mm</span>
                        <Button className="h-6 w-[66px]">Avanzado...</Button>
                    </div>
                    <div className="mt-[5px] h-[240px] w-[263px] border border-[#a0a0a0] pt-[4px] shadow-[inset_1px_1px_0_#fff,1px_1px_0_#fff]">
                        <DelayRow label="Retraso de" value="0" unit="ms" />
                        <DelayRow label="Retraso apagado:" value="0" unit="ms" />
                        <Check defaultChecked className="ml-[110px] h-[22px]">Modo de perforacion lase</Check>
                        {range(6).map((i) => <DelayRow key={i} label="Poder de" value="50.0" unit="%" disabled={i > 0} />)}
                    </div>
                </div>
                <Check defaultChecked className="mt-[9px]">Auto synchronize when Modify laser para</Check>
                <div className="mt-[9px] flex justify-end gap-[11px] pr-[20px]">
                    <Button className="h-6 w-[75px]">Ok</Button>
                    <Button className="h-6 w-[75px]">Cancelar</Button>
                </div>
            </div>
        </div>
    </div>
);

/* ---------- bottom ---------- */

const swatches = [
    'bg-[#000000]', 'bg-[#0000ff]', 'bg-[#ff0000]', 'bg-[#00ff00]', 'bg-[#fa8072]',
    'bg-[#ffff00]', 'bg-[#1e90ff]', 'bg-[#8b3510]', 'bg-[#808000]', 'bg-[#008060]',
    'bg-[#ff4500]', 'bg-[#400080]', 'bg-[#fcd0dc]', 'bg-[#b09cf8]', 'bg-[#d6fa9a]',
    'bg-[#fc9058]', 'bg-[#dc7498]', 'bg-[#8870dc]', 'bg-[#78dc74]', 'bg-[#b4a074]',
];

const Palette = () => (
    <div className="flex h-[35px] border-t border-b border-t-white border-b-[#a0a0a0]">
        <div className="flex w-5 flex-col gap-[5px] pt-[7px] pl-[4px]">
            <svg width="7" height="7" stroke="#000" strokeWidth="1.800"><path d="M1 1l5 5M6 1L1 6" /></svg>
            <span className="h-2 w-[5px] border border-t-0 border-[#b0b0b0] bg-white" />
        </div>
        <div className="flex w-[508px] justify-between pt-[4px]">
            {swatches.map((color, i) => (
                <button
                    key={color}
                    type="button"
                    title={`Capa ${i + 1}`}
                    className={`h-[25px] w-6 border ${color} ${i === 2 ? 'border-t-2 border-l-2 border-t-black border-r-white border-b-white border-l-black' : 'border-[#a0a0a0]'}`}
                />
            ))}
        </div>
    </div>
);

const StatusBar = () => (
    <footer className="flex h-5 gap-[2px] pt-px font-['Open_Sans',sans-serif] text-[11px] leading-[17px] whitespace-nowrap">
        <span className="min-w-0 flex-1 border border-[#a0a0a0] pl-[2px]">--- *Bienvenido a utilizar el sistema de corte laser, Proponer el area de visualizacion de 1024x768 o superior*---</span>
        <span className="w-[21px] border border-[#a0a0a0]" />
        <span className="w-[10px] border border-[#a0a0a0]" />
        <span className="w-[6px] border border-[#a0a0a0]" />
        <span className="w-[189px] border border-[#a0a0a0] pl-px">X:465.884mm,Y:376.231mm</span>
    </footer>
);

const apps = [
    { name: 'Cortana', icon: <Icon crisp={false}><circle cx="12" cy="12" r="7" stroke="#fff" strokeWidth="2.200" /></Icon> },
    { name: 'Vista de tareas', icon: <Icon><path d="M3.500 4v2.500h9V4M3.500 9.500h9v6h-9zM3.500 21v-2.500h9V21M17.500 4v16" stroke="#fff" /><rect x="16" y="9" width="3" height="3" fill="#fff" stroke="none" /></Icon> },
    { name: 'Edge', icon: <Icon crisp={false}><g stroke="none"><circle cx="12" cy="12" r="11.500" fill="#1378c8" /><path d="M1 9C4-2 19-2 23 8c2 6-3 10-8 8 3-6-6-12-14-7z" fill="#36c5a8" /><path d="M12 .5c8 0 13 7 11 12-2 4-6 4-8 3 3-5-1-11-10-11C7 2 9 .5 12 .5z" fill="#56d86c" opacity=".7" /><path d="M8 14c0-4 3-6 7-4-2-5-12-4-14 1 0 8 6 12 12 12.500C9 22 8 18 8 14z" fill="#0f5aa8" /></g></Icon> },
    { name: 'Explorador', bar: true, icon: <Icon crisp={false}><g stroke="none"><path d="M1 3h8l2 2h12v17H1z" fill="#f2b82c" /><path d="M1 7h22v14H1z" fill="#ffd35c" /><path d="M5 22v-7q0-2 2-2h10q2 0 2 2v7h-4v-4H9v4z" fill="#3894dc" /></g></Icon> },
    { name: 'Store', icon: <Icon crisp={false}><path d="M8 7V2h8v5" stroke="#fff" strokeWidth="2" /><path d="M2 7h20v16H2z" fill="#fff" stroke="none" /><g stroke="none"><path d="M7 10h4.500v4.500H7z" fill="#f25022" /><path d="M12.500 10H17v4.500h-4.500z" fill="#7fba00" /><path d="M7 15.500h4.500V20H7z" fill="#00a4ef" /><path d="M12.500 15.500H17V20h-4.500z" fill="#ffb900" /></g></Icon> },
    { name: 'Correo', icon: <Icon crisp={false}><g stroke="none"><path d="M0 8L12 1l12 7v15H0z" fill="#0a62b0" /><path d="M0 8l12 9 12-9v15H0z" fill="#30a8ec" /><path d="M24 8v15H0l12-7z" fill="#4cc0f6" /><path d="M2 8h20l-10 8z" fill="#f4f8fc" /></g></Icon> },
    { name: 'Chrome', bar: true, icon: <Icon crisp={false}><g stroke="none"><circle cx="12" cy="12" r="11" fill="#e33b2e" /><path d="M2.500 6.500L8 16l4 7A11 11 0 0 1 2.500 6.500z" fill="#2ba24c" /><path d="M12 7h10A11 11 0 0 1 12 23l5-8z" fill="#fcc934" /><circle cx="12" cy="12" r="5.500" fill="#fff" /><circle cx="12" cy="12" r="4.200" fill="#3a7de8" /></g></Icon> },
    { name: 'Fusion', bar: true, icon: <Icon crisp={false}><rect width="24" height="24" fill="#fbe6d4" stroke="none" /><path d="M8 3h10v3.500h-7v4h6V14h-6v6H8z" fill="#e08a3c" stroke="none" /><path d="M8 3l3 3.500V20H8z" fill="#a8541a" stroke="none" /></Icon> },
    { name: 'Laser', bar: true, active: true, icon: <Logo size={24} /> },
    { name: 'Teams', bar: true, icon: <Icon crisp={false}><g stroke="none"><circle cx="12" cy="4" r="3.500" fill="#7b83eb" /><circle cx="20" cy="5" r="2.500" fill="#5059c9" /><path d="M8 9h11v8q-1 6-6 6t-5-6zM18 9h6v7q0 3-4 3z" fill="#6a72dc" /><rect x="0" y="7" width="12" height="12" rx="1" fill="#4b53bc" /><path d="M3 10h6v1.500H6.800V17H5.200v-5.500H3z" fill="#fff" /></g><circle cx="19" cy="19" r="4.500" fill="#7dba20" stroke="#fff" /><path d="M17 19l1.500 1.500L21 18" stroke="#fff" strokeWidth="1.500" /></Icon> },
];

const tray = [
    ['Mostrar ocultos', <svg width="12" height="8" fill="none" stroke="#fff" strokeWidth="1.500"><path d="M1 7l5-5 5 5" /></svg>],
    ['Bateria', <svg width="18" height="14" fill="none" stroke="#fff"><path d="M5.500 4.500h10v7h-10zM15.500 6.500h2v3M3.500 1v3M1 3.500h5v3l-2.500 1V12" /><rect x="7" y="6" width="7" height="4" fill="#fff" /></svg>],
    ['Camara', <svg width="14" height="18" fill="none" stroke="#fff" strokeWidth="1.300"><rect x="2" y="5" width="7" height="8" rx="1" /><path d="M9 8l3-1v4l-3-1M3 2q4-2 8 0M3 16q4 2 8 0" /></svg>],
    ['Red', <svg width="16" height="16" fill="none" stroke="#ddd"><path d="M2 14A12 12 0 0 1 14 2M5 14a9 9 0 0 1 9-9M8 14a6 6 0 0 1 6-6" /><circle cx="12.500" cy="13" r="2" fill="#fff" stroke="none" /></svg>],
    ['Volumen', <svg width="18" height="16" fill="none" stroke="#fff"><path d="M1 5.500h3l4-4v13l-4-4H1zM10.500 5q2 3 0 6M13 3q3 5 0 10M15 1q4 7 0 14" /></svg>],
];

const Taskbar = () => (
    <div className="flex h-10 bg-linear-to-r from-[#45432e] via-[#49381f] to-[#393824] text-white">
        <button type="button" title="Inicio" className="flex w-12 shrink-0 items-center justify-center">
            <svg width="17" height="17" fill="#fff"><path d="M0 2.500L7.500 1.500V8H0zM8.500 1.300L17 0v8H8.500zM0 9h7.500v6.500L0 14.500zM8.500 9H17v8l-8.500-1.300z" /></svg>
        </button>
        <label className="flex w-[344px] shrink-0 items-center gap-[11px] border border-[#c4c4c4] bg-[#f4f3f2] pl-[11px]">
            <svg width="17" height="17" fill="none" stroke="#222" strokeWidth="1.300"><circle cx="10.500" cy="6.500" r="5.500" /><path d="M6.500 10.500L1 16" /></svg>
            <input
                type="text"
                aria-label="Buscar"
                placeholder="Escribe aquí para buscar"
                className="min-w-0 flex-1 bg-transparent text-sm outline-none placeholder:text-[#3a3a3a]"
            />
        </label>
        {apps.map((app) => (
            <button
                key={app.name}
                type="button"
                title={app.name}
                className={`flex w-[49px] shrink-0 flex-col items-center ${app.active ? 'bg-[#8a6028]' : ''}`}
            >
                <span className="flex h-[38px] items-center pt-[2px]">{app.icon}</span>
                {app.bar && <span className={`h-[2px] bg-[#ffdca8] ${app.active ? 'w-full' : 'w-10'}`} />}
            </button>
        ))}
        <div className="ml-auto flex items-center">
            {tray.map(([name, icon]) => (
                <button key={name} type="button" title={name} className="flex w-6 justify-center">{icon}</button>
            ))}
            <span className="w-[34px] text-center text-[11px]">ESP</span>
            <div className="w-[74px] text-center text-[11px] leading-[18px]">
                <div>19:36</div>
                <div>14/04/2021</div>
            </div>
            <button type="button" title="Notificaciones" className="flex w-[37px] justify-center">
                <svg width="16" height="17" fill="none" stroke="#fff" strokeWidth="1.300"><path d="M1 1h14v11h-4v3.500L7.500 12H1z" /></svg>
            </button>
            <span className="mr-[4px] ml-[9px] h-10 w-px bg-[#777564]" />
        </div>
    </div>
);

const App = () => (
    <div className="relative flex h-screen flex-col overflow-hidden bg-[#f0f0f0] font-['Open_Sans',sans-serif] text-black">
        <TitleBar />
        <MainToolbar />
        <CoordToolbar />
        <div className="flex min-h-0 flex-1 border-t border-[#a0a0a0]">
            <SideBar />
            <Workspace />
            <aside className="ml-[2px] flex w-[296px] shrink-0 flex-col font-[Roboto,sans-serif] text-[11px] leading-[14px]">
                <LayerPanel />
                <ProcessPanel />
            </aside>
        </div>
        <Palette />
        <StatusBar />
        <Taskbar />
        <div className="font-[Roboto,sans-serif] text-[11px] leading-[14px]">
            <LayerDialog />
        </div>
    </div>
);

export default App;
